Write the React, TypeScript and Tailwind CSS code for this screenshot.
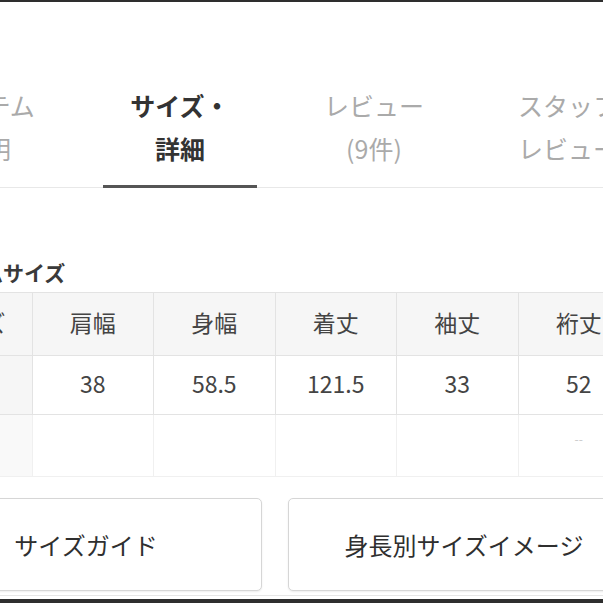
import * as React from "react"

const tabs = [
  { line1: "アイテム", line2: "説明", active: false },
  { line1: "サイズ・", line2: "詳細", active: true },
  { line1: "レビュー", line2: "(9件)", active: false },
  { line1: "スタッフ", line2: "レビュー", active: false },
]

const heads = ["サイズ", "肩幅", "身幅", "着丈", "袖丈", "裄丈"]
const values = ["F", "38", "58.5", "121.5", "33", "52"]

export default function App() {
  return (
    <div className="flex h-[603px] w-[603px] flex-col overflow-hidden bg-white font-['Noto_Sans_CJK_JP','Noto_Sans',sans-serif] text-[#333]">
      <div className="h-[2px] shrink-0 bg-[#2e2e2e]" />

      {/* tabs */}
      <div className="mt-[82px] flex shrink-0 shadow-[inset_0_-1px_0_#e8e8e8]">
        <div className="ml-[-111px] flex">
          {tabs.map((tab) => (
            <div key={tab.line1} className="w-[194px] shrink-0 px-[20px]">
              <div
                className={
                  "flex flex-col items-center border-b-[3px] pb-[15px] text-[25px] leading-[43px] " +
                  (tab.active ? "border-[#555] font-semibold text-[#333]" : "border-transparent text-[#aaa]")
                }
              >
                <span className="whitespace-nowrap">{tab.line1}</span>
                <span className="whitespace-nowrap">{tab.line2}</span>
              </div>
            </div>
          ))}
        </div>
      </div>

      {/* size section */}
      <div className="ml-[-90px] w-[731px] shrink-0">
        <h2 className="mt-[69px] mb-[5px] pl-[11px] text-[21px] font-semibold leading-[30px] text-[#3a3a3a]">
          アイテムサイズ
        </h2>

        <table className="w-[730px] table-fixed border-collapse text-[23px] text-[#444]">
          <thead>
            <tr className="h-[63px] bg-[#f6f6f6]">
              {heads.map((h) => (
                <th key={h} className="border border-[#e3e3e3] pb-[3px] font-normal">
                  {h}
                </th>
              ))}
            </tr>
          </thead>
          <tbody>
            <tr className="h-[59px]">
              {values.map((v, i) => (
                <td
                  key={i}
                  className={"border border-[#e3e3e3] pb-[3px] text-center " + (i === 0 ? "bg-[#f6f6f6]" : "")}
                >
                  {v}
                </td>
              ))}
            </tr>
            <tr className="h-[62px]">
              {values.map((_, i) => (
                <td
                  key={i}
                  className={
                    "border border-[#f0f0f0] pb-[14px] text-center text-[12px] text-[#c8c8c8] " +
                    (i === 0 ? "bg-[#f9f9f9]" : "")
                  }
                >
                  {i === 5 ? "--" : ""}
                </td>
              ))}
            </tr>
          </tbody>
        </table>

        {/* buttons */}
        <div className="mt-[21px] flex gap-[26px]">
          <button className="flex h-[93px] w-[352px] items-center justify-center rounded-[5px] border border-[#d6d6d6] bg-white text-[24px] text-[#2f2f2f] shadow-[0_1px_2px_rgba(0,0,0,0.08)]">
            サイズガイド
          </button>
          <button className="flex h-[93px] w-[352px] items-center justify-center rounded-[5px] border border-[#d6d6d6] bg-white text-[24px] text-[#2f2f2f] shadow-[0_1px_2px_rgba(0,0,0,0.08)]">
            身長別サイズイメージ
          </button>
        </div>
      </div>

      <div className="mt-auto h-[1px] shrink-0 bg-[#e6e6e6]" />
      <div className="mt-[3px] h-[4px] shrink-0 bg-[#2e2e2e]" />
    </div>
  )
}
